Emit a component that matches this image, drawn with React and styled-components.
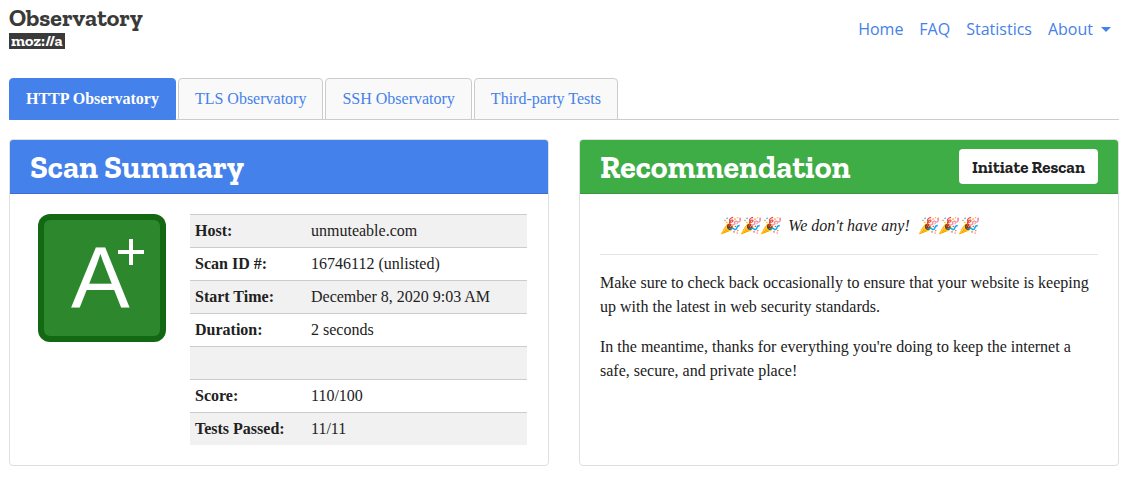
import React from "react";
import styled, { createGlobalStyle } from "styled-components";

const slab = `"Zilla Slab", "DejaVu Serif Condensed", "DejaVu Serif", serif`;

const GlobalStyle = createGlobalStyle`
  *, *::before, *::after { box-sizing: border-box; }
  body {
    margin: 0;
    background: #fff;
    color: #212529;
    font: 16px/24px "Liberation Serif", "Times New Roman", serif;
  }
  a { color: #4581ea; text-decoration: none; }
`;

const Page = styled.div`
  padding: 8px 9px 15px;
`;

const Header = styled.header`
  display: flex;
  justify-content: space-between;
  align-items: flex-start;
  height: 70px;
`;

const Brand = styled.a`
  && { color: #3a3a3a; }
  display: flex;
  flex-direction: column;
  align-items: flex-start;
  font-family: ${slab};
  font-weight: 700;
`;

const BrandName = styled.span`
  font-size: 24px;
  line-height: 20px;
  margin-bottom: 5px;
`;

const BrandMark = styled.span`
  background: #3a3a3a;
  color: #fff;
  font-size: 16px;
  line-height: 16px;
  padding: 0 2px;
`;

const Nav = styled.nav`
  display: flex;
  gap: 16px;
  padding: 9px 8px 0 0;
  font-family: "Open Sans", sans-serif;
`;

const NavLink = styled.a`
  display: flex;
  align-items: center;
  gap: 8px;
`;

const Caret = styled.span`
  border: 5px solid transparent;
  border-top-color: currentColor;
  border-bottom: 0;
`;

const Tabs = styled.nav`
  display: flex;
  gap: 2px;
  border-bottom: 1px solid #ccc;
  margin-bottom: 19px;
`;

const Tab = styled.a`
  padding: 8px 16px;
  margin-bottom: -1px;
  border: 1px solid ${(p) => (p.$active ? "#4581ea" : "#ccc")};
  border-radius: 4px 4px 0 0;
  && { color: ${(p) => (p.$active ? "#fff" : "#4581ea")}; }
  background: ${(p) => (p.$active ? "#4581ea" : "#f9f9f9")};
  font-weight: ${(p) => (p.$active ? 700 : 400)};
`;

const Columns = styled.main`
  display: grid;
  grid-template-columns: 1fr 1fr;
  gap: 30px;
`;

const Card = styled.section`
  border: 1px solid #dfdfdf;
  border-radius: 4px;
  overflow: hidden;
`;

const CardHeader = styled.div`
  display: flex;
  align-items: center;
  justify-content: space-between;
  height: 54px;
  padding: 0 20px;
  color: #fff;
  background: ${(p) => p.$color};
  border-bottom: 1px solid ${(p) => p.$edge};
`;

const CardTitle = styled.h2`
  margin: 0;
  font: 700 32px/36px ${slab};
`;

const RescanButton = styled.button`
  height: 35px;
  padding: 0 13px;
  border: 0;
  border-radius: 4px;
  background: #fff;
  color: #212121;
  font: 700 17px/24px ${slab};
  white-space: nowrap;
`;

const CardBody = styled.div`
  padding: 20px;
`;

const Summary = styled(CardBody)`
  display: flex;
  align-items: flex-start;
  gap: 24px;
  padding-left: 28px;
  padding-right: 21px;
`;

const Badge = styled.svg`
  flex: none;
  width: 128px;
  height: 128px;
  font-family: "Liberation Sans", Arial, sans-serif;
`;

const Facts = styled.table`
  flex: 1;
  border-collapse: separate;
  border-spacing: 0;
  th, td {
    height: 33px;
    padding: 4px 5px;
    border-top: 1px solid #ccc;
    text-align: left;
    color: #212121;
  }
  th { width: 116px; white-space: nowrap; }
  tr:nth-child(odd) { background: #f1f1f1; }
`;

const Cheer = styled.p`
  margin: 0;
  padding-bottom: 16px;
  border-bottom: 1px solid #e5e5e5;
  text-align: center;
  font-style: italic;
  color: #212121;
  white-space: pre-wrap;
`;

const Paragraph = styled.p`
  margin: 16px 0 0;
  color: #212121;
`;

const links = ["Home", "FAQ", "Statistics"];
const tabs = ["HTTP Observatory", "TLS Observatory", "SSH Observatory", "Third-party Tests"];
const facts = [
  ["Host:", "unmuteable.com"],
  ["Scan ID #:", "16746112 (unlisted)"],
  ["Start Time:", "December 8, 2020 9:03 AM"],
  ["Duration:", "2 seconds"],
  ["", ""],
  ["Score:", "110/100"],
  ["Tests Passed:", "11/11"],
];

function GradeBadge() {
  return (
    <Badge viewBox="0 0 128 128" role="img" aria-label="Grade A+">
      <rect width="128" height="128" rx="12" fill="#136913" />
      <rect x="6" y="6" width="116" height="116" rx="6" fill="#2d882d" />
      <text x="33" y="94" fontSize="88" fill="#fff">A</text>
      <path d="M80 38h26M93 25v26" stroke="#fff" strokeWidth="4" />
    </Badge>
  );
}

export default function App() {
  return (
    <>
      <GlobalStyle />
      <Page>
        <Header>
          <Brand href="#">
            <BrandName>Observatory</BrandName>
            <BrandMark>moz://a</BrandMark>
          </Brand>
          <Nav>
            {links.map((l) => (
              <NavLink href="#" key={l}>{l}</NavLink>
            ))}
            <NavLink href="#">About<Caret /></NavLink>
          </Nav>
        </Header>
        <Tabs>
          {tabs.map((t, i) => (
            <Tab href="#" key={t} $active={i === 0}>{t}</Tab>
          ))}
        </Tabs>
        <Columns>
          <Card>
            <CardHeader $color="#4581ea" $edge="#3b6fc9">
              <CardTitle>Scan Summary</CardTitle>
            </CardHeader>
            <Summary>
              <GradeBadge />
              <Facts>
                <tbody>
                  {facts.map(([name, value], i) => (
                    <tr key={i}>
                      <th scope="row">{name}</th>
                      <td>{value}</td>
                    </tr>
                  ))}
                </tbody>
              </Facts>
            </Summary>
          </Card>
          <Card>
            <CardHeader $color="#3fad46" $edge="#369a3c">
              <CardTitle>Recommendation</CardTitle>
              <RescanButton type="button">Initiate Rescan</RescanButton>
            </CardHeader>
            <CardBody>
              <Cheer>{"🎉🎉🎉  We don't have any!  🎉🎉🎉"}</Cheer>
              <Paragraph>
                Make sure to check back occasionally to ensure that your website is keeping up with
                the latest in web security standards.
              </Paragraph>
              <Paragraph>
                In the meantime, thanks for everything you're doing to keep the internet a safe,
                secure, and private place!
              </Paragraph>
            </CardBody>
          </Card>
        </Columns>
      </Page>
    </>
  );
}
